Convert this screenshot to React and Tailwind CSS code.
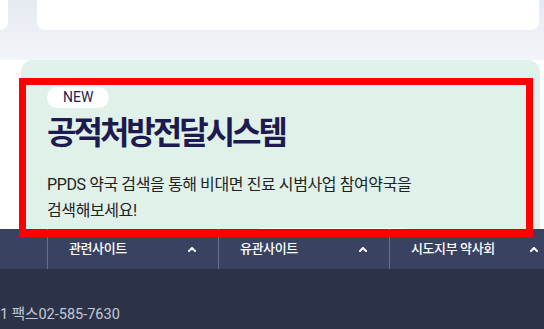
export default function App() {
  const navItems = ["관련사이트", "유관사이트", "시도지부 약사회"];

  return (
    <div
      className="relative w-[544px] h-[329px] overflow-hidden bg-white"
      style={{ fontFamily: 'Roboto, "Noto Sans CJK KR", sans-serif' }}
    >
      {/* top band with cards */}
      <div className="h-[60px] bg-gradient-to-b from-[#e6eaf1] to-[#f2f5f9] flex gap-[29px]">
        <div className="w-[8px] h-[30px] bg-white rounded-br-[8px]" />
        <div className="w-[502px] h-[30px] bg-white rounded-b-[8px]" />
      </div>

      {/* green banner */}
      <div className="ml-[21px] w-[519px] h-[169px] overflow-hidden bg-[#e0f1ea] rounded-t-[12px] pt-[25px] pl-[26px]">
        <span className="inline-flex items-center h-[21px] px-[16px] rounded-full bg-white text-[14px] font-normal text-[#1e1a52] leading-none">
          NEW
        </span>
        <h2
          className="mt-[3px] text-[32px] font-bold leading-[36px] tracking-[-3px] text-[#1c1a4f]"
          style={{ fontFamily: '"Noto Sans CJK KR", sans-serif' }}
        >
          공적처방전달시스템
        </h2>
        <p className="mt-[24px] text-[16px] leading-[26px] tracking-[-0.4px] text-[#222222]">
          PPDS 약국 검색을 통해 비대면 진료 시범사업 참여약국을
          <br />
          검색해보세요!
        </p>
        <div className="ml-[203px] mt-[4px] w-[165px] h-[24px] bg-white rounded-t-[12px]" />
      </div>

      {/* footer */}
      <div className="bg-[#2c3349] h-[100px]">
        <div className="flex h-[40px] bg-[#394361]">
          <div className="w-[47px] shrink-0" />
          {navItems.map((item) => (
            <div
              key={item}
              className="w-[171px] shrink-0 border-l border-[#66708c] flex items-center justify-between pl-[21px] pr-[22px]"
            >
              <span className="text-[13px] font-medium text-white tracking-[-0.4px]">{item}</span>
              <svg width="8" height="5" viewBox="0 0 8 5" fill="none">
                <path d="M1 4 L4 1 L7 4" stroke="white" strokeWidth="2" strokeLinecap="square" />
              </svg>
            </div>
          ))}
        </div>
        <div className="pt-[39px] text-[14.5px] text-[#c5c9d4] leading-none">1 팩스02-585-7630</div>
      </div>

      {/* highlight frame */}
      <div className="absolute left-[19px] top-[78px] w-[514px] h-[159px] border-[7px] border-[#ff0000] pointer-events-none" />
    </div>
  );
}
